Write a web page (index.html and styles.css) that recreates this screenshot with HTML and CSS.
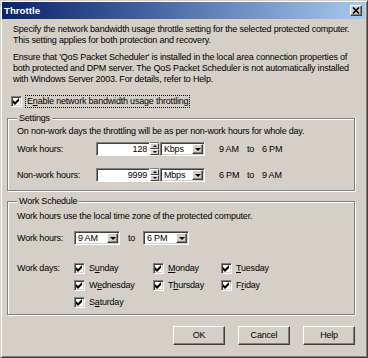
FILE: index.html
```html
<!DOCTYPE html>
<html>
<head>
<meta charset="utf-8">
<link rel="stylesheet" href="styles.css">
</head>
<body>
<div class="window">
  <div class="titlebar">
    <span class="title">Throttle</span>
    <span class="close"><svg width="8" height="7" viewBox="0 0 8 7"><path d="M1 0.5 L7 6.5 M7 0.5 L1 6.5" stroke="#000" stroke-width="1.6"/></svg></span>
  </div>
  <div class="content">
    <p class="intro first">Specify the network bandwidth usage throttle setting for the selected protected computer.<br>This setting applies for both protection and recovery.</p>
    <p class="intro second">Ensure that 'QoS Packet Scheduler' is installed in the local area connection properties of<br>both protected and DPM server. The QoS Packet Scheduler is not automatically installed<br>with Windows Server 2003. For details, refer to Help.</p>
    <div class="check enable">
      <span class="box"><svg width="7" height="7" viewBox="0 0 7 7"><path d="M0 2 L2 4 L6 0 L6 3 L2 7 L0 5 Z" fill="#000"/></svg></span>
      <span class="focus">E<u>n</u>able network bandwidth usage throttling</span>
    </div>

    <fieldset class="group settings">
      <legend>Settings</legend>
      <p class="note">On non-work days the throttling will be as per non-work hours for whole day.</p>
      <div class="rate-row">
        <span class="lbl">Work hours:</span>
        <div class="spin">
          <span class="edit">128</span>
          <span class="spinbtns"><span class="sb up"></span><span class="sb down"></span></span>
        </div>
        <div class="combo unit"><span class="val">Kbps</span><span class="drop"></span></div>
        <span class="range"><span class="t1">9 AM</span><span class="to">to</span><span>6 PM</span></span>
      </div>
      <div class="rate-row second-row">
        <span class="lbl">Non-work hours:</span>
        <div class="spin">
          <span class="edit">9999</span>
          <span class="spinbtns"><span class="sb up"></span><span class="sb down"></span></span>
        </div>
        <div class="combo unit"><span class="val">Mbps</span><span class="drop"></span></div>
        <span class="range"><span class="t1">6 PM</span><span class="to">to</span><span>9 AM</span></span>
      </div>
    </fieldset>

    <fieldset class="group schedule">
      <legend>Work Schedule</legend>
      <p class="note">Work hours use the local time zone of the protected computer.</p>
      <div class="hours-row">
        <span class="lbl2">Work hours:</span>
        <div class="combo time"><span class="val">9 AM</span><span class="drop"></span></div>
        <span class="to2">to</span>
        <div class="combo time"><span class="val">6 PM</span><span class="drop"></span></div>
      </div>
      <div class="days">
        <span class="lbl2">Work days:</span>
        <div class="check day"><span class="box"><svg width="7" height="7" viewBox="0 0 7 7"><path d="M0 2 L2 4 L6 0 L6 3 L2 7 L0 5 Z" fill="#000"/></svg></span><span>S<u>u</u>nday</span></div>
        <div class="check day"><span class="box"><svg width="7" height="7" viewBox="0 0 7 7"><path d="M0 2 L2 4 L6 0 L6 3 L2 7 L0 5 Z" fill="#000"/></svg></span><span><u>M</u>onday</span></div>
        <div class="check day"><span class="box"><svg width="7" height="7" viewBox="0 0 7 7"><path d="M0 2 L2 4 L6 0 L6 3 L2 7 L0 5 Z" fill="#000"/></svg></span><span><u>T</u>uesday</span></div>
        <span></span>
        <div class="check day"><span class="box"><svg width="7" height="7" viewBox="0 0 7 7"><path d="M0 2 L2 4 L6 0 L6 3 L2 7 L0 5 Z" fill="#000"/></svg></span><span>W<u>e</u>dnesday</span></div>
        <div class="check day"><span class="box"><svg width="7" height="7" viewBox="0 0 7 7"><path d="M0 2 L2 4 L6 0 L6 3 L2 7 L0 5 Z" fill="#000"/></svg></span><span>T<u>h</u>ursday</span></div>
        <div class="check day"><span class="box"><svg width="7" height="7" viewBox="0 0 7 7"><path d="M0 2 L2 4 L6 0 L6 3 L2 7 L0 5 Z" fill="#000"/></svg></span><span>F<u>r</u>iday</span></div>
        <span></span>
        <div class="check day"><span class="box"><svg width="7" height="7" viewBox="0 0 7 7"><path d="M0 2 L2 4 L6 0 L6 3 L2 7 L0 5 Z" fill="#000"/></svg></span><span>S<u>a</u>turday</span></div>
      </div>
    </fieldset>

    <div class="buttons">
      <span class="btn">OK</span>
      <span class="btn">Cancel</span>
      <span class="btn">Help</span>
    </div>
  </div>
</div>
</body>
</html>
```

FILE: styles.css
```css
* { box-sizing: border-box; margin: 0; padding: 0; }
html, body { width: 368px; height: 358px; overflow: hidden; }
body {
  background: #d4d0c8;
  font: 9px/11px "Liberation Sans", Arial, sans-serif;
  color: #000;
  letter-spacing: -0.2px;
}
.window {
  width: 368px;
  height: 358px;
  border: 1px solid;
  border-color: #d4d0c8 #404040 #404040 #d4d0c8;
  box-shadow: inset 1px 1px 0 #fff, inset -1px -1px 0 #808080;
  padding: 1px 2px 2px 1px;
  display: flex;
  flex-direction: column;
}
.titlebar {
  height: 17px;
  background: linear-gradient(to right, #0a246a 0%, #3a5b98 35%, #a6caf0 100%);
  display: flex;
  align-items: center;
  justify-content: space-between;
  padding: 0 3px 0 2px;
}
.title {
  color: #fff;
  font-weight: bold;
  font-size: 9.7px;
  letter-spacing: 0;
}
.close {
  width: 12px;
  height: 11px;
  background: #d4d0c8;
  border: 1px solid;
  border-color: #fff #404040 #404040 #fff;
  box-shadow: inset -1px -1px 0 #808080;
  display: flex;
  align-items: center;
  justify-content: center;
}
.close svg { display: block; }
.content {
  padding: 0 10px 0 5px;
  display: flex;
  flex-direction: column;
}
.intro { white-space: nowrap; margin-left: 6px; }
.intro.first { margin-top: 5px; }
.intro.second { margin-top: 6px; }

.check { display: flex; align-items: center; white-space: nowrap; }
.box {
  width: 11px;
  height: 11px;
  background: #fff;
  border: 1px solid;
  border-color: #808080 #fff #fff #808080;
  box-shadow: inset 1px 1px 0 #404040, inset -1px -1px 0 #d4d0c8;
  display: flex;
  align-items: center;
  justify-content: center;
  flex: none;
}
.box svg { display: block; }
.enable { margin-top: 10px; margin-left: 4px; height: 13px; }
.enable .box { margin-right: 3px; }
.focus { border: 1px dotted #000; padding: 0 1px; line-height: 11px; }

.group {
  border: 1px solid #808080;
  box-shadow: inset 1px 1px 0 #fff, 1px 1px 0 #fff;
  padding: 0 8px 0 9px;
  min-width: 0;
}
.group legend {
  padding: 0 2px;
  background: #d4d0c8;
  line-height: 11px;
}
.settings { margin-top: 5px; padding-bottom: 8px; }
.note { white-space: nowrap; margin-top: 2px; }
.settings .note { margin-top: 2px; }

.rate-row { display: flex; align-items: center; margin-top: 5px; height: 14px; white-space: nowrap; }
.rate-row.second-row { margin-top: 12px; }
.lbl { width: 79px; flex: none; }
.spin { display: flex; width: 63px; height: 14px; flex: none; }
.edit {
  width: 54px;
  height: 14px;
  background: #fff;
  border: 1px solid;
  border-color: #808080 #fff #fff #808080;
  box-shadow: inset 1px 1px 0 #404040;
  text-align: right;
  padding-right: 2px;
  line-height: 12px;
}
.spinbtns {
  width: 9px;
  height: 14px;
  display: flex;
  flex-direction: column;
  border-top: 1px solid #808080;
  border-bottom: 1px solid #fff;
}
.sb {
  flex: 1;
  background: #d4d0c8;
  border: 1px solid;
  border-color: #fff #404040 #404040 #fff;
  position: relative;
  display: flex;
  align-items: center;
  justify-content: center;
}
.sb::after {
  content: "";
  width: 0;
  height: 0;
  border-left: 2px solid transparent;
  border-right: 2px solid transparent;
}
.sb.up::after { border-bottom: 2px solid #000; }
.sb.down::after { border-top: 2px solid #000; }

.combo {
  display: flex;
  height: 14px;
  background: #fff;
  border: 1px solid;
  border-color: #808080 #fff #fff #808080;
  box-shadow: inset 1px 1px 0 #404040, inset -1px -1px 0 #d4d0c8;
  padding: 1px;
  flex: none;
}
.combo .val { flex: 1; padding-left: 2px; line-height: 10px; }
.drop {
  width: 11px;
  background: #d4d0c8;
  border: 1px solid;
  border-color: #fff #404040 #404040 #fff;
  box-shadow: inset -1px -1px 0 #808080;
  display: flex;
  align-items: center;
  justify-content: center;
}
.drop::after {
  content: "";
  border-left: 3px solid transparent;
  border-right: 3px solid transparent;
  border-top: 3px solid #000;
}
.unit { width: 45px; margin-left: 1px; }
.range { margin-left: 14px; display: flex; }
.t1 { width: 28px; }
.to { width: 15px; }

.schedule { margin-top: 5px; padding-bottom: 5px; }
.schedule .note { margin-top: 4px; }
.hours-row { display: flex; align-items: center; margin-top: 9px; white-space: nowrap; }
.lbl2 { width: 57px; flex: none; white-space: nowrap; }
.time { width: 46px; }
.to2 { width: 23px; padding-left: 8px; }

.days {
  display: grid;
  grid-template-columns: 57px 79px 68px 1fr;
  grid-auto-rows: 13px;
  row-gap: 4px;
  margin-top: 17px;
  align-items: center;
}
.day .box { margin-right: 4px; }

.buttons {
  display: flex;
  justify-content: flex-end;
  gap: 13px;
  margin-top: 11px;
}
.btn {
  width: 52px;
  height: 19px;
  border: 1px solid;
  border-color: #fff #404040 #404040 #fff;
  box-shadow: inset -1px -1px 0 #808080;
  display: flex;
  align-items: center;
  justify-content: center;
}
```
